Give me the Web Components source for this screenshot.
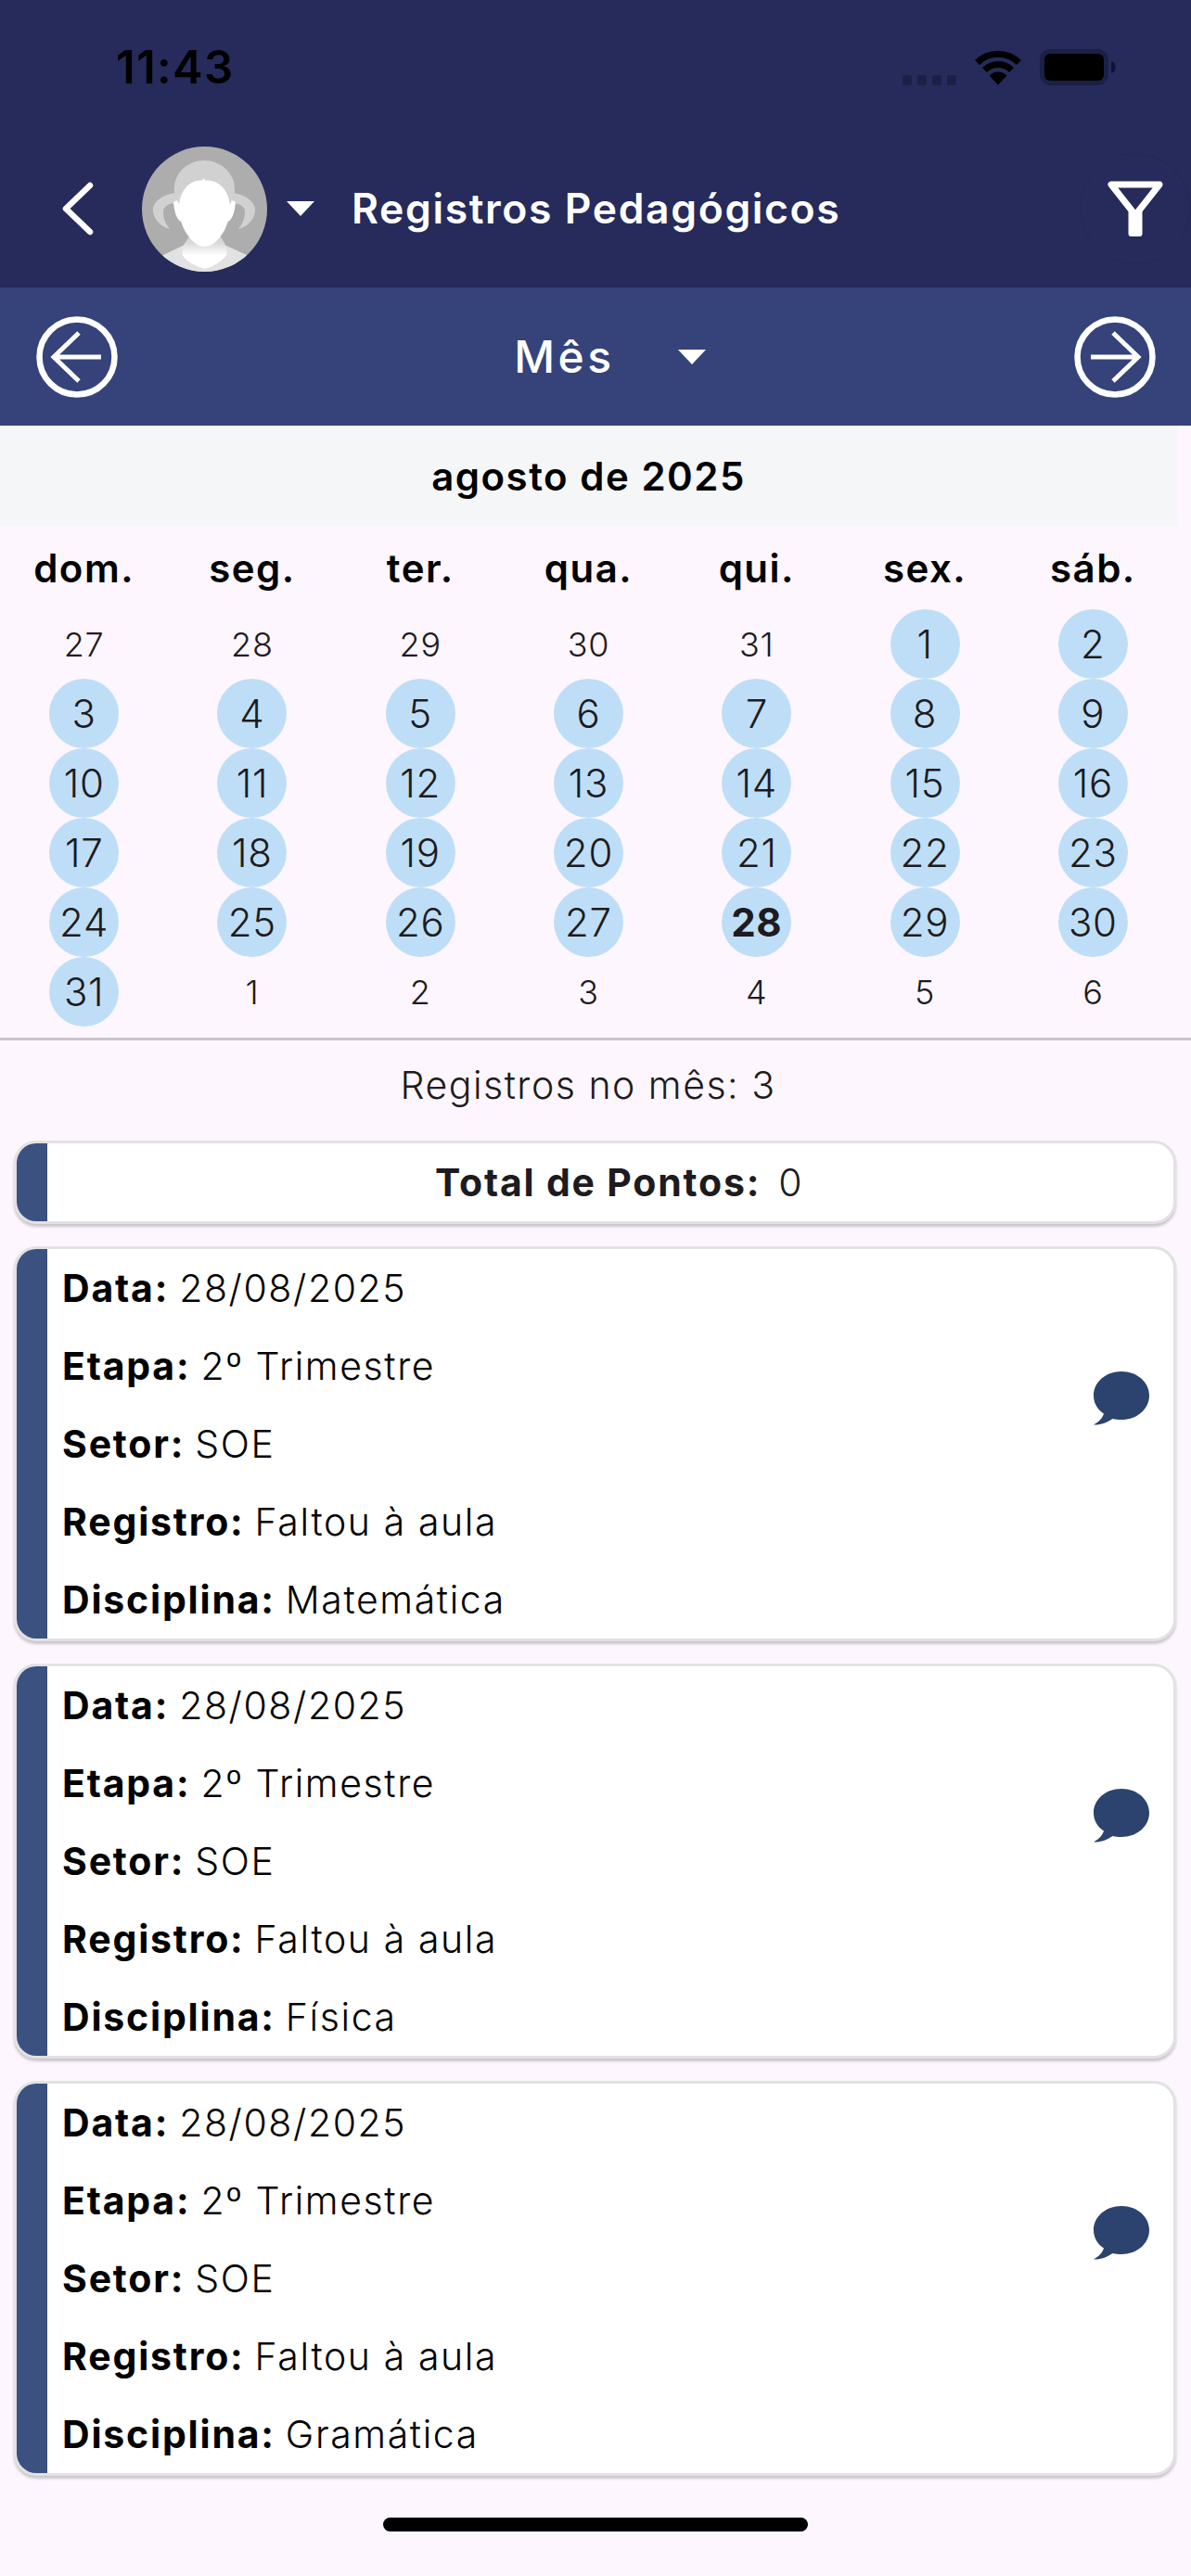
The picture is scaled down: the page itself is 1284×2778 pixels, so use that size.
<!DOCTYPE html>
<html lang="pt-BR">
<head>
<meta charset="utf-8">
<title>Registros Pedagógicos</title>
<style>
  html, body { margin: 0; padding: 0; }
  body {
    width: 1284px;
    height: 2778px;
    overflow: hidden;
    background: #fdf6ff;
    font-family: Inter, "Liberation Sans", sans-serif;
    color: #1d1b20;
  }
</style>
</head>
<body>
  <app-header title-text="Registros Pedagógicos" time="11:43"></app-header>
  <period-nav label="Mês"></period-nav>
  <month-calendar title-text="agosto de 2025" today="28"></month-calendar>
  <month-summary>Registros no mês: 3</month-summary>
  <total-card label="Total de Pontos:" value="0"></total-card>
  <record-card>
    <record-row label="Data:">28/08/2025</record-row>
    <record-row label="Etapa:">2º Trimestre</record-row>
    <record-row label="Setor:">SOE</record-row>
    <record-row label="Registro:">Faltou à aula</record-row>
    <record-row label="Disciplina:">Matemática</record-row>
  </record-card>
  <record-card>
    <record-row label="Data:">28/08/2025</record-row>
    <record-row label="Etapa:">2º Trimestre</record-row>
    <record-row label="Setor:">SOE</record-row>
    <record-row label="Registro:">Faltou à aula</record-row>
    <record-row label="Disciplina:">Física</record-row>
  </record-card>
  <record-card>
    <record-row label="Data:">28/08/2025</record-row>
    <record-row label="Etapa:">2º Trimestre</record-row>
    <record-row label="Setor:">SOE</record-row>
    <record-row label="Registro:">Faltou à aula</record-row>
    <record-row label="Disciplina:">Gramática</record-row>
  </record-card>
  <home-indicator></home-indicator>

<script>
/**
 * Status bar + title bar
 */
class AppHeader extends HTMLElement {
  constructor() {
    super();
    this.attachShadow({ mode: 'open' });
  }

  connectedCallback() {
    this.shadowRoot.innerHTML = `
      <style>
        :host { display: block; height: 310px; background: #262b5b; }
        .status { height: 165px; box-sizing: border-box; position: relative; }
        .time {
          position: absolute; left: 125px; top: 43px;
          font-size: 49px; line-height: 60px; font-weight: 600; color: #000; letter-spacing: 1.3px;
        }
        .status-icons {
          position: absolute; left: 973px; top: 53px;
          display: flex; align-items: flex-start;
        }
        .signal { display: flex; gap: 6px; margin-top: 28px; }
        .signal i { display: block; width: 10px; height: 11px; border-radius: 2px; background: #1b2046; }
        .wifi { display: block; margin-left: 19px; margin-top: 1px; }
        .battery { display: block; margin-left: 19px; }
        .bar { display: flex; align-items: center; height: 120px; }
        .back { display: block; margin-left: 66px; }
        .avatar { display: block; margin-left: 51px; }
        .caret { display: block; margin-left: 21px; }
        h1 {
          flex: 1; margin: 0 0 0 40px;
          font-size: 44.5px; line-height: 60px; font-weight: 600; color: #fff; letter-spacing: 1.6px;
          white-space: nowrap;
        }
        .filter {
          width: 120px; height: 120px; box-sizing: border-box; flex: none;
          border: 1px solid #232855; border-radius: 50%;
          display: flex; align-items: center; justify-content: center;
        }
      </style>
      <div class="status">
        <div class="time">${this.getAttribute('time')}</div>
        <div class="status-icons">
          <div class="signal"><i></i><i></i><i></i><i></i></div>
          <svg class="wifi" width="52" height="38" viewBox="0 0 52 38">
            <g fill="none" stroke="#000" stroke-width="7">
              <path d="M3.5 13.5a31.8 31.8 0 0 1 45 0"/>
              <path d="M11.5 21.5a20.5 20.5 0 0 1 29 0"/>
            </g>
            <path d="M26 37.5 16.500 27.500a13.500 13.500 0 0 1 19 0z" fill="#000"/>
          </svg>
          <svg class="battery" width="82" height="39" viewBox="0 0 82 39">
            <rect x="2.5" y="2.5" width="69" height="34" rx="9" fill="none" stroke="#1b2046" stroke-width="5"/>
            <rect x="5" y="5" width="64" height="29" rx="6" fill="#000"/>
            <path d="M77 13c3 1 4.500 3 4.500 6.500S80 25 77 26z" fill="#0e1230"/>
          </svg>
        </div>
      </div>
      <div class="bar">
        <svg class="back" width="36" height="60" viewBox="0 0 36 60">
          <path d="M31 5 5 30l26 25" fill="none" stroke="#fff" stroke-width="6.500" stroke-linecap="round" stroke-linejoin="round"/>
        </svg>
        <svg class="avatar" width="135" height="135" viewBox="0 0 135 135">
          <defs>
            <clipPath id="round"><circle cx="67.500" cy="67.500" r="67.500"/></clipPath>
            <linearGradient id="neck" x1="0" y1="0" x2="0" y2="1">
              <stop offset=".2" stop-color="#d8d8d8"/>
              <stop offset=".6" stop-color="#fff"/>
            </linearGradient>
          </defs>
          <g clip-path="url(#round)">
            <rect width="135" height="135" fill="#adadad"/>
            <path d="M35 50C33 28 50 15 67 15s35 13 33 35v14H35z" fill="#d2d1d2"/>
            <path d="M36 50C22 52 11 60 12 70c1 9 9 17 18 19-4-5-7-11-7-19 0-5 6-9 13-9z" fill="#d2d1d2"/>
            <path d="M98 50c14 2 25 10 24 20-1 9-9 17-18 19 4-5 7-11 7-19 0-5-6-9-13-9z" fill="#d2d1d2"/>
            <path d="M23 117 46 106h43l24 11 22 18H0z" fill="#e2e2e2"/>
            <path d="M52 96H84L90 106C92 112 92 116 90 119 84 125 76 130 68 132 60 130 50 125 45 119 43 116 43 112 45 106z" fill="url(#neck)"/>
            <path d="M66.500 34l1.500 2.500C83 35 95 48 95 66 95 88 80 108 67.500 108 55 108 40 88 40 66 40 48 52 35 65 36.500z" fill="#fff"/>
            <path d="M34 60c1 10 3 18 8 21l2-10-6-13zM101 60c-1 10-3 18-8 21l-2-10 6-13z" fill="#fff"/>
          </g>
        </svg>
        <svg class="caret" width="30" height="16" viewBox="0 0 30 16"><path d="M0 0h30L15 16z" fill="#fff"/></svg>
        <h1>${this.getAttribute('title-text')}</h1>
        <div class="filter">
          <svg width="62" height="62" viewBox="0 0 62 62">
            <path d="M5 5h52L31 38z" fill="none" stroke="#fff" stroke-width="7" stroke-linejoin="round"/>
            <rect x="23.500" y="32" width="15" height="29" rx="3" fill="#fff"/>
          </svg>
        </div>
      </div>
    `;
  }
}

/**
 * Month / week selector strip
 */
class PeriodNav extends HTMLElement {
  constructor() {
    super();
    this.attachShadow({ mode: 'open' });
  }

  connectedCallback() {
    this.shadowRoot.innerHTML = `
      <style>
        :host {
          display: flex; align-items: center; justify-content: space-between;
          height: 149px; box-sizing: border-box; padding: 1px 38px 0 39px;
          background: #35437a;
        }
        .picker { display: flex; align-items: center; padding-left: 32px; }
        .label { font-size: 48px; line-height: 60px; font-weight: 500; color: #fff; letter-spacing: 3.5px; }
        .caret { display: block; margin-left: 68px; margin-right: 2px; }
        svg { display: block; }
      </style>
      <svg width="88" height="88" viewBox="0 0 88 88" fill="none" stroke="#fff">
        <circle cx="44" cy="44" r="40.500" stroke-width="6.500"/>
        <path d="M70 44H20M46 18 19 44l27 26" stroke-width="5"/>
      </svg>
      <div class="picker">
        <span class="label">${this.getAttribute('label')}</span>
        <svg class="caret" width="30" height="16" viewBox="0 0 30 16"><path d="M0 0h30L15 16z" fill="#fff"/></svg>
      </div>
      <svg width="88" height="88" viewBox="0 0 88 88" fill="none" stroke="#fff">
        <circle cx="44" cy="44" r="40.500" stroke-width="6.500"/>
        <path d="M18 44H68M42 18l27 26-27 26" stroke-width="5"/>
      </svg>
    `;
  }
}

const WEEK_DAYS = ['dom.', 'seg.', 'ter.', 'qua.', 'qui.', 'sex.', 'sáb.'];
const LEADING_DAYS = [27, 28, 29, 30, 31];
const MONTH_LENGTH = 31;
const TRAILING_DAYS = [1, 2, 3, 4, 5, 6];

class MonthCalendar extends HTMLElement {
  constructor() {
    super();
    this.attachShadow({ mode: 'open' });
  }

  connectedCallback() {
    const today = Number(this.getAttribute('today'));
    let cells = LEADING_DAYS.map(d => `<div class="cell"><span class="day out">${d}</span></div>`).join('');
    for (let d = 1; d <= MONTH_LENGTH; d++) {
      cells += `<div class="cell"><span class="day in ${d === today ? 'today' : ''}">${d}</span></div>`;
    }
    cells += TRAILING_DAYS.map(d => `<div class="cell"><span class="day out">${d}</span></div>`).join('');

    this.shadowRoot.innerHTML = `
      <style>
        :host { display: block; }
        .inner { width: 1269px; }
        .title {
          height: 108px; display: flex; align-items: center; justify-content: center;
          background: #f5f6f8; font-size: 42px; font-weight: 600; color: #000; letter-spacing: 1.500px;
        }
        .week { display: grid; grid-template-columns: repeat(7, 1fr); height: 90px; align-items: center; }
        .week span { text-align: center; font-size: 42px; font-weight: 600; color: #000; letter-spacing: 1.500px; }
        .days { display: grid; grid-template-columns: repeat(7, 1fr); grid-auto-rows: 75px; }
        .cell { display: flex; align-items: center; justify-content: center; }
        .day {
          width: 75px; height: 75px; border-radius: 50%;
          display: flex; align-items: center; justify-content: center;
          color: #1d1b20;
        }
        .out { font-size: 36px; font-weight: 300; letter-spacing: .75px; }
        .in { font-size: 42px; font-weight: 300; letter-spacing: .75px; background: #bedef7; }
        .today { font-weight: 700; }
        hr { margin: 12px 0 0; border: 0; height: 3px; background: #cac4d0; width: 1284px; }
      </style>
      <div class="inner">
        <div class="title">${this.getAttribute('title-text')}</div>
        <div class="week">${WEEK_DAYS.map(d => `<span>${d}</span>`).join('')}</div>
        <div class="days">${cells}</div>
      </div>
      <hr>
    `;
  }
}

class MonthSummary extends HTMLElement {
  constructor() {
    super();
    this.attachShadow({ mode: 'open' });
  }

  connectedCallback() {
    this.shadowRoot.innerHTML = `
      <style>
        :host {
          display: block; width: 1268px; height: 108px; box-sizing: border-box; padding-top: 23px;
          text-align: center; font-size: 41px; line-height: 50px; font-weight: 300;
          letter-spacing: 1.500px; color: #1d1b20;
        }
      </style>
      <slot></slot>
    `;
  }
}

/**
 * Cards with the blue stripe on the left
 */
const CARD_STYLE = `
  :host {
    display: flex; width: 1253px; margin: 0 0 24px 15px; box-sizing: border-box;
    background: #fff; border: 3px solid #e2e2e2; border-radius: 24px;
    box-shadow: 0 3px 3px rgba(0, 0, 0, .2); overflow: hidden;
  }
  .stripe { width: 33px; flex: none; background: #3b5180; }
`;

class TotalCard extends HTMLElement {
  constructor() {
    super();
    this.attachShadow({ mode: 'open' });
  }

  connectedCallback() {
    this.shadowRoot.innerHTML = `
      <style>
        ${CARD_STYLE}
        .body {
          flex: 1; height: 84px; display: flex; align-items: center; justify-content: center;
          padding-left: 19px; font-size: 41px; letter-spacing: 1.500px; color: #1d1b20;
        }
        b { font-weight: 700; letter-spacing: 1.800px; margin-right: 19px; }
        span { font-weight: 300; }
      </style>
      <div class="stripe"></div>
      <div class="body"><b>${this.getAttribute('label')}</b><span>${this.getAttribute('value')}</span></div>
    `;
  }
}

class RecordCard extends HTMLElement {
  constructor() {
    super();
    this.attachShadow({ mode: 'open' });
  }

  connectedCallback() {
    this.shadowRoot.innerHTML = `
      <style>
        ${CARD_STYLE}
        .rows { flex: 1; padding-left: 16px; }
        svg { display: block; flex: none; margin: 132px 26px 0 0; }
      </style>
      <div class="stripe"></div>
      <div class="rows"><slot></slot></div>
      <svg width="60" height="58" viewBox="0 0 60 58">
        <path d="M30 0C47 0 60 11.500 60 26S47 52 30 52c-3.500 0-6.500-.4-9.500-1C15 55 7 58 0 57.500 5.500 54.500 9.500 50.500 11 45.500 4 41 0 34 0 26 0 11.500 13 0 30 0z" fill="#2c4370"/>
      </svg>
    `;
  }
}

class RecordRow extends HTMLElement {
  constructor() {
    super();
    this.attachShadow({ mode: 'open' });
  }

  connectedCallback() {
    this.shadowRoot.innerHTML = `
      <style>
        :host {
          display: flex; align-items: center; height: 84px;
          font-size: 41px; letter-spacing: 1.500px; color: #000; white-space: nowrap;
        }
        b { font-weight: 700; letter-spacing: 1.800px; margin-right: 11px; }
        span { font-weight: 300; letter-spacing: 1.600px; }
      </style>
      <b>${this.getAttribute('label')}</b><span><slot></slot></span>
    `;
  }
}

class HomeIndicator extends HTMLElement {
  constructor() {
    super();
    this.attachShadow({ mode: 'open' });
  }

  connectedCallback() {
    this.shadowRoot.innerHTML = `
      <style>
        :host {
          display: block; width: 458px; height: 15px; margin: 45px 0 0 413px;
          border-radius: 8px; background: #000;
        }
      </style>
    `;
  }
}

customElements.define('app-header', AppHeader);
customElements.define('period-nav', PeriodNav);
customElements.define('month-calendar', MonthCalendar);
customElements.define('month-summary', MonthSummary);
customElements.define('total-card', TotalCard);
customElements.define('record-card', RecordCard);
customElements.define('record-row', RecordRow);
customElements.define('home-indicator', HomeIndicator);
</script>
</body>
</html>
